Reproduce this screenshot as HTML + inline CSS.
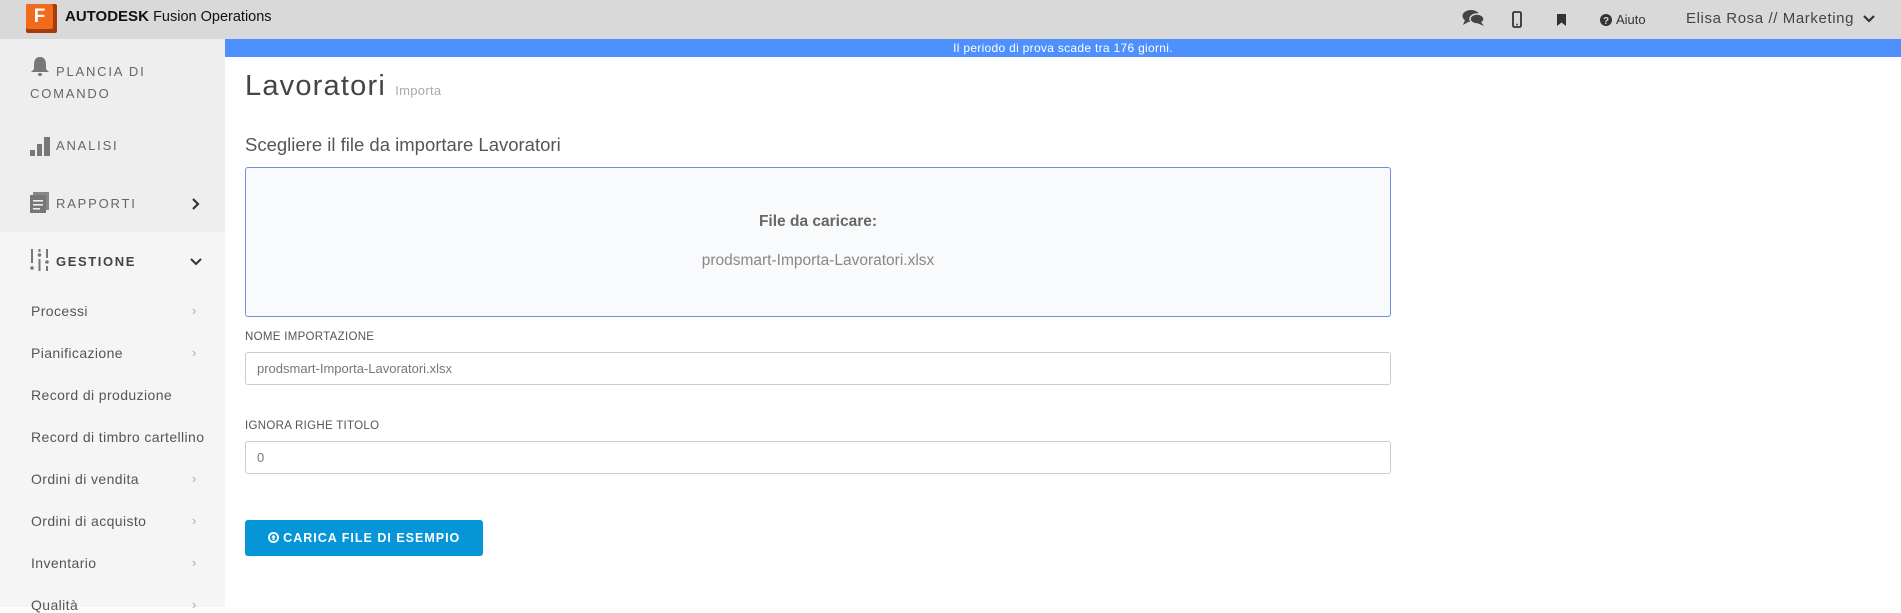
<!DOCTYPE html>
<html><head><meta charset="utf-8">
<style>
*{box-sizing:border-box;margin:0;padding:0}
body{width:1901px;height:607px;overflow:hidden;font-family:"Liberation Sans",sans-serif;background:#fff;position:relative;color:#555}
.hdr{position:absolute;left:0;top:0;width:1901px;height:39px;background:#d9d9d9}
.abs{position:absolute;white-space:nowrap}
.side{position:absolute;left:0;top:39px;width:225px;height:568px;background:#f5f5f5}
.sidetop{position:absolute;left:0;top:0;width:225px;height:193px;background:#eeeeee}
.nav{position:absolute;left:56px;font-size:13px;letter-spacing:1.8px;color:#666}
.sub{position:absolute;left:31px;font-size:14px;letter-spacing:.4px;color:#555}
.chev{position:absolute;left:192px;color:#aaa;font-size:13px}
.blue{position:absolute;left:225px;top:39px;width:1676px;height:18px;background:#4d90fe;color:#fff;font-size:12px;text-align:center;line-height:18px;letter-spacing:.3px}
.lbl{position:absolute;left:245px;font-size:11.5px;color:#555;letter-spacing:.3px}
.inp{position:absolute;left:245px;width:1146px;height:33px;border:1px solid #ccc;border-radius:3px;font-size:13px;color:#777;padding-left:11px;line-height:31px}
</style></head><body>
<div class="hdr">
  <div class="abs" style="left:26px;top:4px;width:31px;height:29px;background:#a33d0d;border-radius:2px"></div>
  <div class="abs" style="left:26px;top:4px;width:27px;height:25px;background:#f26a1b;border-radius:2px;color:#fff;font-weight:bold;font-size:19px;text-align:center;line-height:25px">F</div>
  <div class="abs" style="left:65px;top:8px;font-size:15px;color:#111"><b>AUTODESK</b> <span style="font-size:14.5px">Fusion Operations</span></div>
  <svg class="abs" style="left:1462px;top:9px" width="24" height="18" viewBox="0 0 24 18"><ellipse cx="9" cy="7" rx="8.5" ry="6" fill="#444"/><path d="M3 11 L1 16 L8 12Z" fill="#444"/><ellipse cx="15" cy="10" rx="7" ry="5" fill="#444" stroke="#d9d9d9" stroke-width="1.5"/><path d="M19 13 L22 17 L15 14Z" fill="#444"/></svg>
  <svg class="abs" style="left:1512px;top:11px" width="10" height="17" viewBox="0 0 10 17"><rect x="1" y="1" width="8" height="15" rx="1.5" fill="none" stroke="#333" stroke-width="1.8"/><circle cx="5" cy="13.5" r=".9" fill="#333"/></svg>
  <svg class="abs" style="left:1557px;top:14px" width="9" height="12" viewBox="0 0 9 12"><path d="M0 0H9V12L4.5 8.5L0 12Z" fill="#333"/></svg>
  <svg class="abs" style="left:1600px;top:14px" width="12" height="12" viewBox="0 0 12 12"><circle cx="6" cy="6" r="6" fill="#333"/><text x="6" y="10" font-size="10" font-weight="bold" fill="#d9d9d9" text-anchor="middle" font-family="Liberation Sans">?</text></svg>
  <div class="abs" style="left:1616px;top:12px;font-size:13px;color:#333">Aiuto</div>
  <div class="abs" style="left:1686px;top:10px;font-size:15px;color:#444;letter-spacing:.6px">Elisa Rosa // Marketing</div>
  <svg class="abs" style="left:1863px;top:15px" width="12" height="8" viewBox="0 0 12 8"><path d="M1 1L6 6L11 1" fill="none" stroke="#333" stroke-width="2.2"/></svg>
</div>
<div class="side">
  <div class="sidetop"></div>
  <svg class="abs" style="left:30px;top:17px" width="20" height="21" viewBox="0 0 20 21"><path d="M10 1C5 1 4 5 4 9V13L1 16H19L16 13V9C16 5 15 1 10 1Z" fill="#777"/><rect x="8" y="17" width="4" height="3" rx="1.5" fill="#777"/></svg>
  <div class="nav" style="top:25px">PLANCIA DI</div>
  <div class="nav" style="top:47px;left:30px">COMANDO</div>
  <svg class="abs" style="left:30px;top:96px" width="20" height="21" viewBox="0 0 20 21"><rect x="0" y="15" width="5" height="6" fill="#777"/><rect x="7" y="9" width="5" height="12" fill="#777"/><rect x="14" y="2" width="6" height="19" fill="#777"/></svg>
  <div class="nav" style="top:99px">ANALISI</div>
  <svg class="abs" style="left:30px;top:153px" width="20" height="21" viewBox="0 0 20 21"><rect x="3" y="0" width="16" height="18" fill="#888"/><rect x="0" y="3" width="16" height="18" fill="#777"/><rect x="3" y="8" width="10" height="1.6" fill="#eee"/><rect x="3" y="12" width="10" height="1.6" fill="#eee"/><rect x="3" y="16" width="7" height="1.6" fill="#eee"/></svg>
  <div class="nav" style="top:157px">RAPPORTI</div>
  <svg class="abs" style="left:191px;top:159px" width="9" height="12" viewBox="0 0 9 12"><path d="M2 1L7 6L2 11" fill="none" stroke="#333" stroke-width="2.2"/></svg>
  <svg class="abs" style="left:30px;top:210px" width="20" height="22" viewBox="0 0 20 22"><g fill="#777"><rect x="1" y="0" width="2" height="14"/><circle cx="2" cy="19" r="1.8"/><rect x="8.5" y="0" width="2" height="3"/><circle cx="9.5" cy="6" r="1.8"/><rect x="8.5" y="10" width="2" height="12"/><rect x="16" y="0" width="2" height="9"/><circle cx="17" cy="13" r="1.8"/><rect x="16" y="17" width="2" height="5"/></g></svg>
  <div class="nav" style="top:215px;font-weight:bold;color:#444;letter-spacing:1.6px">GESTIONE</div>
  <svg class="abs" style="left:190px;top:219px" width="12" height="8" viewBox="0 0 12 8"><path d="M1 1L6 6L11 1" fill="none" stroke="#333" stroke-width="2"/></svg>
  <div class="sub" style="top:264px">Processi</div><div class="chev" style="top:264px">›</div>
  <div class="sub" style="top:306px">Pianificazione</div><div class="chev" style="top:306px">›</div>
  <div class="sub" style="top:348px">Record di produzione</div>
  <div class="sub" style="top:390px">Record di timbro cartellino</div>
  <div class="sub" style="top:432px">Ordini di vendita</div><div class="chev" style="top:432px">›</div>
  <div class="sub" style="top:474px">Ordini di acquisto</div><div class="chev" style="top:474px">›</div>
  <div class="sub" style="top:516px">Inventario</div><div class="chev" style="top:516px">›</div>
  <div class="sub" style="top:558px">Qualità</div><div class="chev" style="top:558px">›</div>
</div>
<div class="blue">Il periodo di prova scade tra 176 giorni.</div>
<div class="abs" style="left:245px;top:70px;font-size:29px;color:#444;letter-spacing:1.2px">Lavoratori <span style="font-size:13px;color:#aaa;letter-spacing:.3px">Importa</span></div>
<div class="abs" style="left:245px;top:134px;font-size:18.5px;color:#555">Scegliere il file da importare Lavoratori</div>
<div class="abs" style="left:245px;top:167px;width:1146px;height:150px;border:1px solid #6d8fd8;border-radius:3px;background:#f9fafc"></div>
<div class="abs" style="left:245px;width:1146px;top:213px;text-align:center;font-size:15.5px;font-weight:bold;color:#666">File da caricare:</div>
<div class="abs" style="left:245px;width:1146px;top:252px;text-align:center;font-size:15.5px;color:#888">prodsmart-Importa-Lavoratori.xlsx</div>
<div class="lbl" style="top:331px">NOME IMPORTAZIONE</div>
<div class="inp" style="top:352px">prodsmart-Importa-Lavoratori.xlsx</div>
<div class="lbl" style="top:420px">IGNORA RIGHE TITOLO</div>
<div class="inp" style="top:441px">0</div>
<div class="abs" style="left:245px;top:520px;width:238px;height:36px;background:#0696d7;border-radius:3px;color:#fff;font-size:12.5px;font-weight:bold;letter-spacing:1px;text-align:center;line-height:36px">
<svg width="11" height="11" viewBox="0 0 12 12" style="vertical-align:-1px"><circle cx="6" cy="6" r="5" fill="none" stroke="#fff" stroke-width="2"/><path d="M6 3L3.5 6H5V9H7V6H8.5Z" fill="#fff"/></svg> CARICA FILE DI ESEMPIO</div>
</body></html>
